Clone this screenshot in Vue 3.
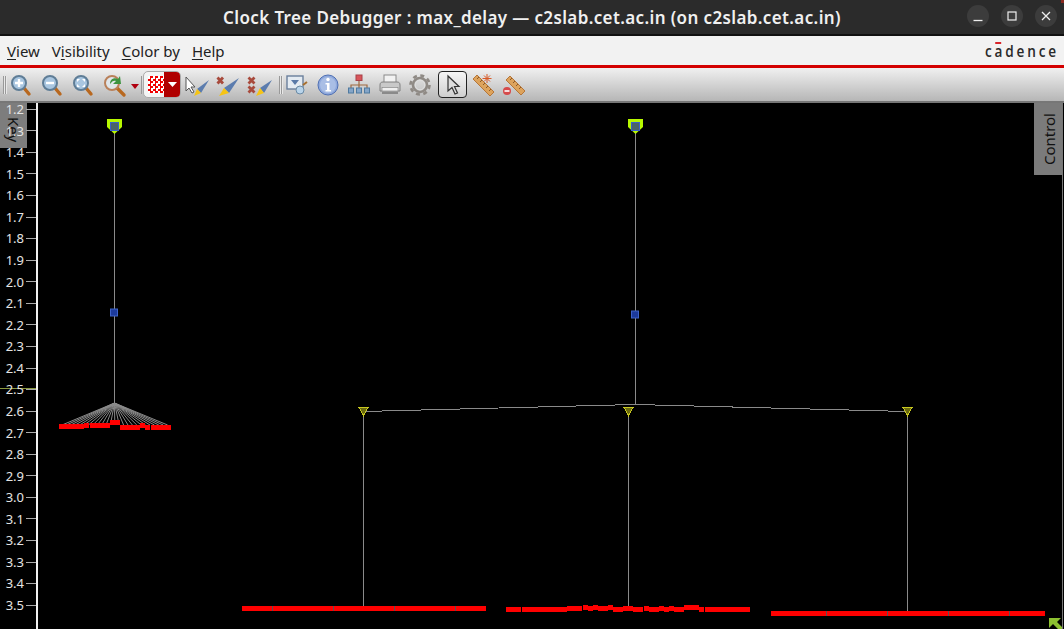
<script setup>
const ticks = []
for (let i = 12; i <= 35; i++) ticks.push((i / 10).toFixed(1))

// fan of nets under the left root
const fan = []
for (let x = 62; x <= 168; x += 4.4) fan.push(x)

// [x, y, width] of the sink groups
const leftSinks = [
  [59, 424, 25], [84, 423, 5], [90, 423, 20], [110, 420, 10],
  [120, 425, 20], [140, 423, 5], [145, 425, 5], [151, 425, 20]
]
const midSinks = [
  [506, 607, 15], [522, 607, 45], [567, 606, 15], [583, 605, 5], [588, 606, 5],
  [593, 605, 5], [598, 606, 10], [608, 605, 5], [613, 607, 10], [623, 606, 10],
  [633, 607, 10], [644, 606, 5], [649, 607, 10], [659, 606, 5], [664, 607, 5],
  [669, 606, 5], [674, 607, 10], [684, 605, 15], [699, 607, 5], [705, 607, 45]
]
const rows = [
  { x: 242, y: 606, w: 244, cuts: [272, 333, 394, 455] },
  { x: 771, y: 611, w: 274, cuts: [826, 887, 948, 1009] }
]
const triangles = [363, 628, 907]
const roots = [114, 635]
</script>

<template>
  <div class="window">
    <header class="titlebar">
      <span class="title">Clock Tree Debugger : max_delay — c2slab.cet.ac.in (on c2slab.cet.ac.in)</span>
      <div class="win-buttons">
        <button class="win-btn">
          <svg width="12" height="12" viewBox="0 0 12 12"><path d="M1.5 10.5h9" stroke="#eee" stroke-width="1.3" /></svg>
        </button>
        <button class="win-btn">
          <svg width="12" height="12" viewBox="0 0 12 12"><rect x="2" y="2" width="8" height="8" fill="none" stroke="#eee" stroke-width="1.2" /></svg>
        </button>
        <button class="win-btn">
          <svg width="12" height="12" viewBox="0 0 12 12"><path d="M2 2l8 8M10 2l-8 8" stroke="#eee" stroke-width="1.3" /></svg>
        </button>
      </div>
      <span class="corner"></span>
    </header>

    <nav class="menubar">
      <span class="menu"><u>V</u>iew</span>
      <span class="menu">V<u>i</u>sibility</span>
      <span class="menu"><u>C</u>olor by</span>
      <span class="menu"><u>H</u>elp</span>
      <span class="logo">c<span class="logo-a">a</span>dence</span>
    </nav>

    <div class="toolbar">
      <div class="grip"></div>

      <svg class="tool" viewBox="0 0 26 26">
        <path d="M17 16l5 6" stroke="#b8681f" stroke-width="3.4" stroke-linecap="round" />
        <circle cx="12" cy="11" r="7" fill="#a9c6e0" stroke="#5f7d96" stroke-width="2" />
        <path d="M8 11h8M12 7v8" stroke="#fff" stroke-width="2.4" />
      </svg>
      <svg class="tool" viewBox="0 0 26 26">
        <path d="M17 16l5 6" stroke="#b8681f" stroke-width="3.4" stroke-linecap="round" />
        <circle cx="12" cy="11" r="7" fill="#a9c6e0" stroke="#5f7d96" stroke-width="2" />
        <path d="M8 11h8" stroke="#fff" stroke-width="2.4" />
      </svg>
      <svg class="tool" viewBox="0 0 26 26">
        <path d="M17 16l5 6" stroke="#b8681f" stroke-width="3.4" stroke-linecap="round" />
        <circle cx="12" cy="11" r="7" fill="#a9c6e0" stroke="#5f7d96" stroke-width="2" />
        <path d="M8 7h3l-3 3zM16 7v3l-3-3zM8 15v-3l3 3zM16 15h-3l3-3z" fill="#fff" />
      </svg>
      <svg class="tool back" viewBox="0 0 26 26">
        <path d="M15 16l7 7" stroke="#b8681f" stroke-width="3.4" stroke-linecap="round" />
        <circle cx="10" cy="11" r="7" fill="#dfe6ea" stroke="#b9805a" stroke-width="2" />
        <path d="M8 12c0-5 4-7 8-5l2-3 1 8-8 0 3-3c-2-1-4 0-6 3z" fill="#3d9440" />
      </svg>
      <svg class="drop" width="10" height="6" viewBox="0 0 10 6"><path d="M1 0h8l-4 5z" fill="#b00010" /></svg>
      <div class="sep"></div>

      <button class="color-btn">
        <span class="checker"></span>
        <span class="color-drop">
          <svg width="9" height="5" viewBox="0 0 9 5"><path d="M0 0h9l-4.500 5z" fill="#fff" /></svg>
        </span>
      </button>

      <svg class="tool" viewBox="0 0 26 26">
        <path d="M2 5v14l3-3 3 5 2-1-3-5h4z" fill="#fff" stroke="#555" stroke-width="1" />
        <path d="M25 8l-12 9 4 4z" fill="#5b7cae" />
        <path d="M13 17l-3 7 7-3z" fill="#f6c414" />
      </svg>
      <svg class="tool" viewBox="0 0 26 26">
        <path d="M2.500 5.500l5.500 6M8 5.500l-5.500 6" stroke="#a84a3c" stroke-width="2.800" />
        <path d="M24 6l-15 10 5 5z" fill="#5b7cae" />
        <path d="M9 16l-5 8 10-3z" fill="#f6c414" />
      </svg>
      <svg class="tool xx" viewBox="0 0 26 26">
        <path d="M1.500 5.500l6 6M7.500 5.500l-6 6M1.500 14.500l6 6M7.500 14.500l-6 6" stroke="#a84a3c" stroke-width="2.800" />
        <path d="M25 8l-12 8 4 5z" fill="#5b7cae" />
        <path d="M13 16l-4 8 8-3z" fill="#f6c414" />
      </svg>

      <div class="grip second"></div>

      <svg class="tool" viewBox="0 0 26 26">
        <rect x="3" y="4" width="16" height="13" fill="#e4ebf2" stroke="#6a7f9c" stroke-width="1.4" />
        <path d="M7 8h8l-4 5z" fill="#5a7aa8" />
        <circle cx="16" cy="18" r="4" fill="#b9d4ea" stroke="#6a8aa5" />
        <path d="M19 13l4-3" stroke="#a87030" stroke-width="2" />
      </svg>
      <svg class="tool" viewBox="0 0 26 26">
        <circle cx="13" cy="13" r="10" fill="#8fa9dc" stroke="#4f70b4" />
        <circle cx="13" cy="13" r="8" fill="#dbe6f7" opacity=".35" />
        <circle cx="13" cy="7.500" r="1.700" fill="#fff" />
        <path d="M10.500 11h4v7h1.500v1.500h-5.500V18h1.500v-5.500h-1.500z" fill="#fff" />
      </svg>
      <svg class="tool" viewBox="0 0 26 26">
        <path d="M13 9v4M5 16v-3h16v3M13 13v3" fill="none" stroke="#a06a40" stroke-width="1.200" />
        <rect x="10" y="3" width="6" height="5.500" fill="#d8555a" stroke="#a84048" />
        <rect x="2.500" y="16" width="5" height="5" fill="#84a5c8" stroke="#4f7aa0" />
        <rect x="10.500" y="16" width="5" height="5" fill="#84a5c8" stroke="#4f7aa0" />
        <rect x="18.500" y="16" width="5" height="5" fill="#84a5c8" stroke="#4f7aa0" />
      </svg>
      <svg class="tool" viewBox="0 0 26 26">
        <rect x="7" y="3" width="12" height="9" fill="#f2f2f2" stroke="#8a8a8a" />
        <path d="M3 13c0-2 1-3 3-3h14c2 0 3 1 3 3v6H3z" fill="#c9c9c9" stroke="#808080" />
        <rect x="5" y="15.500" width="16" height="3.500" fill="#f0f0f0" stroke="#8a8a8a" stroke-width=".7" />
        <path d="M5 21h16" stroke="#8a8a8a" stroke-width="2" />
      </svg>
      <svg class="tool" viewBox="0 0 26 26">
        <circle cx="12" cy="13" r="9.500" fill="none" stroke="#8f8a85" stroke-width="2.600" stroke-dasharray="4 3.460" />
        <circle cx="12" cy="13" r="7" fill="none" stroke="#8f8a85" stroke-width="2.600" />
        <circle cx="12" cy="13" r="4.800" fill="none" stroke="#e0e0e0" />
      </svg>

      <button class="pointer">
        <svg width="16" height="22" viewBox="0 0 16 22">
          <path d="M3 2v15l4-3.500 3 6.500 2.500-1-3-6.500H14z" fill="#ddd" stroke="#333" stroke-width="1.200" />
        </svg>
      </button>

      <svg class="tool" viewBox="0 0 26 26">
        <path d="M3 7l4-4 17 17-4 4z" fill="#dda35c" stroke="#b5763a" />
        <path d="M7 7l2-2M10 10l2-2M13 13l2-2M16 16l2-2M19 19l2-2" stroke="#8c5a28" />
        <path d="M17 2v9M12.500 6.500h9M14 3.500l6 6M20 3.500l-6 6" stroke="#d85a28" stroke-width="1" />
      </svg>
      <svg class="tool last" viewBox="0 0 26 26">
        <path d="M6 8l4-4 15 15-4 4z" fill="#dda35c" stroke="#b5763a" />
        <path d="M10 8l2-2M13 11l2-2M16 14l2-2M19 17l2-2" stroke="#8c5a28" />
        <circle cx="7" cy="19" r="4" fill="#d64a4a" />
        <path d="M4.500 19h5" stroke="#fff" stroke-width="1.600" />
      </svg>
    </div>

    <main class="canvas">
      <div class="axis">
        <div v-for="tick in ticks" :key="tick" class="axis-row">
          <span class="axis-label">{{ tick }}</span>
          <span class="axis-tick"></span>
        </div>
      </div>

      <svg class="plot" width="1026" height="526" viewBox="38 103 1026 526" shape-rendering="crispEdges">
        <!-- left tree -->
        <path d="M114.500 133V403" stroke="#8a8a8a" />
        <line v-for="x in fan" :key="x" x1="114.500" y1="403" :x2="x" y2="425" stroke="#8a8a8a" shape-rendering="auto" />
        <rect v-for="s in leftSinks" :key="s[0]" :x="s[0]" :y="s[1]" :width="s[2]" height="5" fill="#ff0000" />

        <!-- right tree -->
        <path d="M635.500 133V405" stroke="#8a8a8a" />
        <path d="M363 411.500L635 404.500L907 411.500" fill="none" stroke="#8a8a8a" />
        <path d="M363.500 415V606M628.500 415V607M907.500 415V611" stroke="#8a8a8a" />

        <g v-for="s in rows" :key="s.x">
          <rect :x="s.x" :y="s.y" :width="s.w" height="5" fill="#ff0000" />
          <rect v-for="c in s.cuts" :key="c" :x="c" :y="s.y" width="1" height="5" fill="#555" />
        </g>
        <rect v-for="s in midSinks" :key="s[0]" :x="s[0]" :y="s[1]" :width="s[2]" height="5" fill="#ff0000" />

        <g v-for="x in triangles" :key="x">
          <path :d="`M${x - 4} 407.500h9l-4.500 8z`" fill="#6b6a10" stroke="#c8c820" />
        </g>

        <g v-for="x in roots" :key="x" shape-rendering="auto">
          <path :d="`M${x - 7} 119h15v8l-7.500 7l-7.500-7z`" fill="#b8f800" />
          <rect :x="x - 3.500" y="122.500" width="8" height="8" fill="#4a6468" stroke="#3a5fc8" />
          <rect :x="x - 3.500" :y="x === 114 ? 309 : 311" width="7" height="7" fill="#1c3a9c" stroke="#3d62c8" />
        </g>

        <path d="M1062.500 103V629" stroke="#777" />
        <path d="M1049 618h12l-4 4 5 5v2h-4l-5-5-4 4z" fill="#8cc030" shape-rendering="auto" />
      </svg>

      <div class="slider-mark"></div>
      <div class="key-tab"><span>Key</span></div>
      <div class="control-tab"><span>Control</span></div>
    </main>
  </div>
</template>

<style>
html, body {
  margin: 0;
  background: #000;
  overflow: hidden;
}
</style>

<style scoped>
.window {
  display: flex;
  flex-direction: column;
  width: 1064px;
  height: 629px;
  overflow: hidden;
  font-family: "Noto Sans", sans-serif;
}

/* title bar */
.titlebar {
  flex: none;
  display: flex;
  align-items: center;
  justify-content: center;
  position: relative;
  height: 34px;
  background: #2b2b2b;
  border-bottom: 2px solid #111;
}

.title {
  color: #f0f0f0;
  font-size: 17px;
  font-weight: 600;
  letter-spacing: 0.37px;
}

.win-buttons {
  position: absolute;
  right: 7px;
  top: 5px;
  display: flex;
  gap: 12px;
}

.win-btn {
  display: flex;
  align-items: center;
  justify-content: center;
  width: 22px;
  height: 22px;
  padding: 0;
  border: none;
  border-radius: 50%;
  background: #3c3c3c;
}

.corner {
  position: absolute;
  right: 0;
  top: 0;
  width: 3px;
  height: 3px;
  background: #8a2a20;
}

/* menu */
.menubar {
  flex: none;
  display: flex;
  align-items: center;
  height: 29px;
  padding-left: 7px;
  gap: 12px;
  background: #f2f2f2;
  border-bottom: 3px solid #d40000;
  font-size: 15px;
  color: #222;
}

.menu u {
  text-decoration-skip-ink: none;
  text-underline-offset: 2px;
}

.logo {
  margin-left: auto;
  margin-right: 5px;
  font-family: "Open Sans", sans-serif;
  font-size: 16px;
  font-weight: 600;
  letter-spacing: 3.3px;
  color: #2a2a2a;
  transform: scaleX(0.85);
  transform-origin: right center;
}

.logo-a {
  position: relative;
}

.logo-a::before {
  content: "";
  position: absolute;
  left: 1px;
  top: 2px;
  width: 7px;
  height: 2px;
  background: #d8242a;
}

/* toolbar */
.toolbar {
  flex: none;
  display: flex;
  align-items: center;
  gap: 5px;
  box-sizing: border-box;
  height: 35px;
  padding-left: 3px;
  background: linear-gradient(#f0f0f0, #b6b6b6);
  border-bottom: 2px solid #777;
}

.grip {
  width: 4px;
  height: 18px;
  margin-right: -5px;
  background: repeating-linear-gradient(90deg, #999 0 1px, #e8e8e8 1px 2px);
}

.grip.second {
  margin-left: 1px;
  margin-right: -4px;
}

.tool {
  flex: none;
  width: 26px;
  height: 26px;
}

.back {
  margin-left: 2px;
}

.drop {
  flex: none;
  margin: 5px 0 0 -3px;
}

.sep {
  width: 1px;
  height: 18px;
  margin-left: -4px;
  margin-right: -4px;
  background: #999;
}

.color-btn {
  flex: none;
  display: flex;
  width: 38px;
  height: 27px;
  padding: 0;
  overflow: hidden;
  border: 1px solid #aaa;
  border-radius: 5px;
  background: #f4f4f4;
  margin-right: -2px;
}

.checker {
  flex: 1;
  margin: 4px 0 4px 4px;
  background: repeating-conic-gradient(#f00000 0 25%, #fff 0 50%) 0 0 / 5px 5px;
}

.color-drop {
  display: flex;
  align-items: center;
  justify-content: center;
  width: 16px;
  background: #b00000;
}

.xx {
  margin-left: 1px;
}

.last {
  margin-left: -1px;
}

.pointer {
  flex: none;
  display: flex;
  align-items: center;
  justify-content: center;
  box-sizing: border-box;
  width: 29px;
  height: 27px;
  padding: 0;
  border: 1px solid #222;
  border-radius: 4px;
  background: linear-gradient(#f6f6f6, #cfcfcf);
  margin-left: -1px;
  margin-right: -2px;
}

/* canvas */
.canvas {
  flex: 1;
  display: flex;
  position: relative;
  overflow: hidden;
  background: #000;
}

.axis {
  flex: none;
  position: relative;
  z-index: 1;
  box-sizing: border-box;
  width: 38px;
  height: 530px;
  margin-top: -4.5px;
  border-right: 2px solid #f0f0f0;
}

.axis-row {
  display: flex;
  align-items: center;
  height: 21.565px;
}

.axis-label {
  width: 26px;
  padding-right: 2px;
  box-sizing: border-box;
  text-align: right;
  font-size: 13px;
  line-height: 0.8;
  color: #e4e4e4;
}

.axis-tick {
  width: 10px;
  height: 1px;
  background: #aaa;
}

.plot {
  display: block;
  flex: none;
}

.slider-mark {
  position: absolute;
  left: 0;
  top: 285px;
  width: 37px;
  height: 1px;
  background: #8a9a40;
}

.key-tab,
.control-tab {
  position: absolute;
  display: flex;
  justify-content: center;
  color: #111;
}

.key-tab {
  left: 0;
  top: 0;
  width: 27px;
  height: 45px;
  padding-top: 9px;
  box-sizing: border-box;
  background: #7d7d7d;
  writing-mode: vertical-rl;
  align-items: center;
  font-size: 15px;
}

.key-tab span {
  line-height: 27px;
}

.control-tab {
  right: 2px;
  top: 0;
  width: 28px;
  height: 72px;
  align-items: center;
  background: #7b7b7b;
  font-size: 15px;
  padding-left: 1px;
  box-sizing: border-box;
}

.control-tab span {
  writing-mode: vertical-rl;
  transform: rotate(180deg);
}
</style>
